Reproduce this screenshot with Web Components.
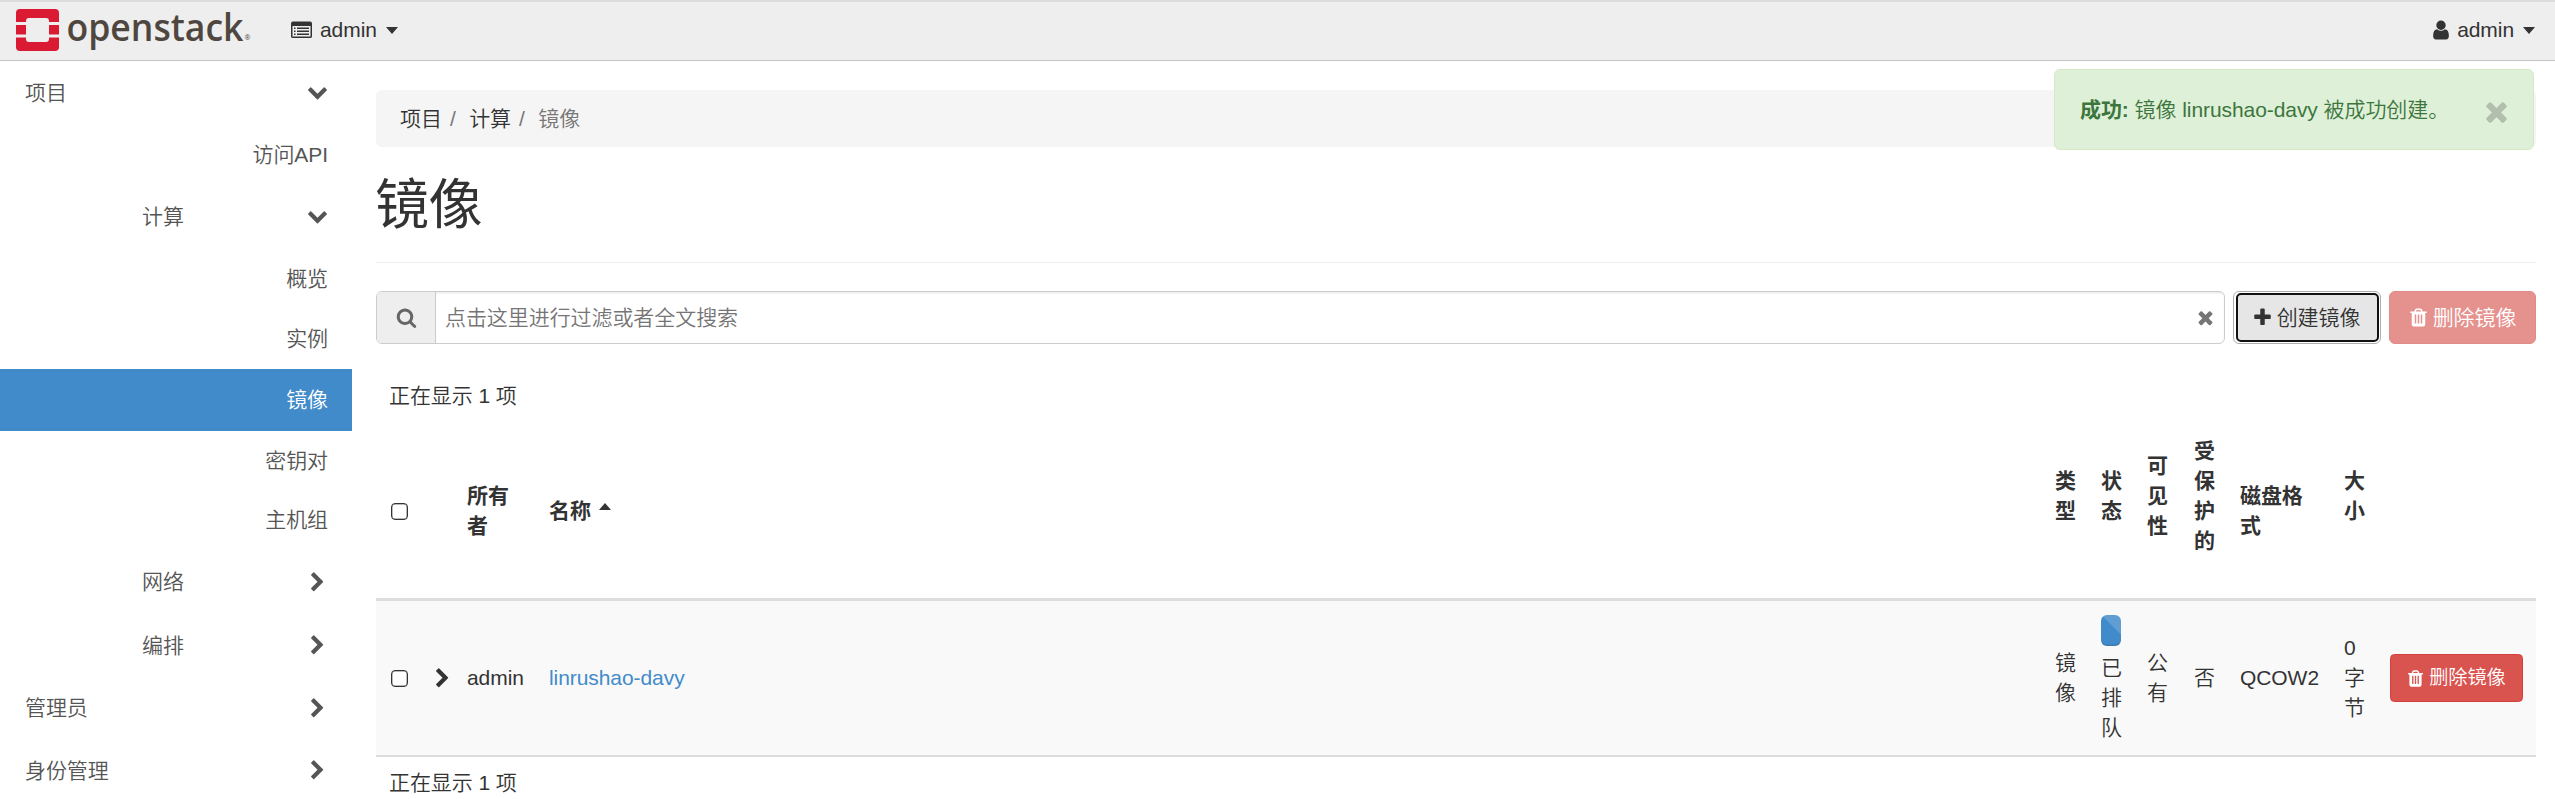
<!DOCTYPE html>
<html lang="zh-CN">
<head>
<meta charset="utf-8">
<title>镜像 - OpenStack Dashboard</title>
<style>
html,body{margin:0;padding:0;height:799px;overflow:hidden;background:#fff}
body{font:350 21px/30px "Liberation Sans","Noto Sans CJK SC",sans-serif;color:#333;letter-spacing:-.07px}
</style>
</head>
<body>
<os-app></os-app>
<script>
const ICONS={
down:'M1683 808l-742 741q-19 19-45 19t-45-19l-742-741q-19-19-19-45.5t19-45.5l166-165q19-19 45-19t45 19l531 531 531-531q19-19 45-19t45 19l166 165q19 19 19 45.5t-19 45.5z',
right:'M1363 877l-742 742q-19 19-45 19t-45-19l-166-166q-19-19-19-45t19-45l531-531-531-531q-19-19-19-45t19-45l166-166q19-19 45-19t45 19l742 742q19 19 19 45t-19 45z',
search:'M1216 832q0-185-131.5-316.5t-316.5-131.5-316.5 131.5-131.5 316.5 131.5 316.5 316.5 131.5 316.5-131.5 131.5-316.5zm512 832q0 52-38 90t-90 38q-54 0-90-38l-343-342q-179 124-399 124-143 0-273.5-55.5t-225-150-150-225-55.5-273.5 55.5-273.5 150-225 225-150 273.5-55.5 273.5 55.5 225 150 150 225 55.5 273.5q0 220-124 399l343 343q37 37 37 90z',
times:'M1490 1322q0 40-28 68l-136 136q-28 28-68 28t-68-28l-294-294-294 294q-28 28-68 28t-68-28l-136-136q-28-28-28-68t28-68l294-294-294-294q-28-28-28-68t28-68l136-136q28-28 68-28t68 28l294 294 294-294q28-28 68-28t68 28l136 136q28 28 28 68t-28 68l-294 294 294 294q28 28 28 68z',
plus:'M1600 736v192q0 40-28 68t-68 28h-416v416q0 40-28 68t-68 28h-192q-40 0-68-28t-28-68v-416h-416q-40 0-68-28t-28-68v-192q0-40 28-68t68-28h416v-416q0-40 28-68t68-28h192q40 0 68 28t28 68v416h416q40 0 68 28t28 68z',
trash:'M704 1376v-704q0-14-9-23t-23-9h-64q-14 0-23 9t-9 23v704q0 14 9 23t23 9h64q14 0 23-9t9-23zm256 0v-704q0-14-9-23t-23-9h-64q-14 0-23 9t-9 23v704q0 14 9 23t23 9h64q14 0 23-9t9-23zm256 0v-704q0-14-9-23t-23-9h-64q-14 0-23 9t-9 23v704q0 14 9 23t23 9h64q14 0 23-9t9-23zm-544-992h448l-48-117q-7-9-17-11h-317q-10 2-17 11zm928 32v64q0 14-9 23t-23 9h-96v948q0 83-47 143.5t-113 60.5h-832q-66 0-113-58.5t-47-141.5v-952h-96q-14 0-23-9t-9-23v-64q0-14 9-23t23-9h309l70-167q15-37 54-63t79-26h320q40 0 79 26t54 63l70 167h309q14 0 23 9t9 23z',
user:'M1536 1399q0 109-62.5 187t-150.5 78h-854q-88 0-150.5-78t-62.5-187q0-85 8.5-160.5t31.5-152 58.5-131 94-89 134.5-34.5q131 128 313 128t313-128q76 0 134.5 34.5t94 89 58.5 131 31.5 152 8.5 160.5zm-256-887q0 159-112.5 271.5t-271.5 112.5-271.5-112.5-112.5-271.5 112.5-271.5 271.5-112.5 271.5 112.5 112.5 271.5z',
list:'M160 128h1472q160 0 160 160v1088q0 160-160 160h-1472q-160 0-160-160v-1088q0-160 160-160zM128 512v864q0 32 32 32h1472q32 0 32-32v-864zM256 640h128v128h-128zM512 640h1024v128h-1024zM256 896h128v128h-128zM512 896h1024v128h-1024zM256 1152h128v128h-128zM512 1152h1024v128h-1024z'
};
function define(name,markup){
  customElements.define(name,class extends HTMLElement{
    constructor(){super();this.attachShadow({mode:'open'}).innerHTML=typeof markup==='function'?'':markup;}
    connectedCallback(){if(typeof markup==='function')this.shadowRoot.innerHTML=markup(this);}
  });
}
define('os-icon',el=>`<style>:host{display:block;flex:none;width:21px;height:21px}svg{display:block;width:100%;height:100%}</style>
<svg viewBox="0 0 1792 1792"><path fill="currentColor" fill-rule="${el.getAttribute('name')==='list'?'evenodd':'nonzero'}" d="${ICONS[el.getAttribute('name')]}"/></svg>`);

define('os-logo',`<style>:host{display:flex;width:240px;height:58px}svg{display:block;overflow:visible;flex:none}text{letter-spacing:0}.r{margin:32px 0 0 .5px;font:500 7px/8px "Open Sans",sans-serif;letter-spacing:0;color:#4f473f}</style>
<svg width="228" height="58" viewBox="0 -7 228 58">
<path fill="#da1a32" d="M4 0h35a4 4 0 0 1 4 4v9H33v-1a3 3 0 0 0-3-3H13a3 3 0 0 0-3 3v1H0V4a4 4 0 0 1 4-4zM0 16h10v9.500H0zM33 16h10v9.500H33zM0 28.500h10V30a3 3 0 0 0 3 3h17a3 3 0 0 0 3-3v-1.500h10V38a4 4 0 0 1-4 4H4a4 4 0 0 1-4-4z"/>
<text x="50.500" y="32" textLength="177" lengthAdjust="spacingAndGlyphs" font-family="Open Sans" font-weight="600" font-size="38" fill="#4f473f">openstack</text>
</svg><span class="r">®</span>`);

define('os-topbar',`<style>
:host{display:flex;align-items:center;box-sizing:border-box;height:61px;border-top:2px solid #dcdcdc;border-bottom:1px solid #c4c4c4;background:#eee;padding:0 20px 0 16px}
.m{display:flex;align-items:center;margin-top:-2px}
.caret{border:6px solid transparent;border-top:7px solid #333;border-bottom:0}
.proj{margin-left:35px}.proj os-icon{margin-right:8px}.proj .caret{margin-left:9px}
.user{margin-left:auto}.user os-icon{width:22px;height:22px;margin-right:5px}.user .caret{margin-left:9px}
</style><os-logo></os-logo>
<div class="m proj"><os-icon name="list"></os-icon><span>admin</span><i class="caret"></i></div>
<div class="m user"><os-icon name="user"></os-icon><span>admin</span><i class="caret"></i></div>`);

define('os-nav-item',el=>`<style>
:host{display:flex;box-sizing:border-box;align-items:center;justify-content:space-between;height:62px;padding:0 24px 0 25px;color:#555}
:host([level="2"]){padding-left:142px}
:host([level="3"]){justify-content:flex-end}
:host([active]){background:#428bca;color:#fff}
:host([icon="down"]) os-icon{margin-bottom:3px}
</style><span><slot></slot></span>${el.hasAttribute('icon')?`<os-icon name="${el.getAttribute('icon')}"></os-icon>`:''}`);

define('os-sidebar',`<style>:host{display:block;width:352px;padding-top:1px}</style>
<os-nav-item icon="down">项目</os-nav-item>
<os-nav-item level="3" style="height:61px">访问API</os-nav-item>
<os-nav-item level="2" icon="down" style="height:64px">计算</os-nav-item>
<os-nav-item level="3" style="height:60px">概览</os-nav-item>
<os-nav-item level="3" style="height:60px">实例</os-nav-item>
<os-nav-item level="3" active>镜像</os-nav-item>
<os-nav-item level="3" style="height:59px">密钥对</os-nav-item>
<os-nav-item level="3" style="height:60px">主机组</os-nav-item>
<os-nav-item level="2" icon="right" style="height:64px">网络</os-nav-item>
<os-nav-item level="2" icon="right" style="height:63px">编排</os-nav-item>
<os-nav-item icon="right">管理员</os-nav-item>
<os-nav-item icon="right" style="height:63px">身份管理</os-nav-item>`);

define('os-breadcrumb',`<style>:host{display:flex;align-items:center;box-sizing:border-box;height:57px;padding:1px 24px 0;background:#f5f5f5;border-radius:6px}
.s{color:#777;padding:0 13.5px 0 8px}.a{color:#777}</style>
<span>项目</span><span class="s">/</span><span>计算</span><span class="s">/</span><span class="a">镜像</span>`);

define('os-button',el=>`<style>
:host{display:flex;flex:none;box-sizing:border-box;align-items:center;justify-content:center;height:53px;border-radius:6px}
:host([kind="focus"]){width:148px;border:1px solid #adadad;background:#fff;padding:1px 1.5px}
:host([kind="focus"]) .in{box-sizing:border-box;border:2.5px solid #111;border-radius:5px;background:#e6e6e6;width:100%;height:100%;padding-right:2px}
:host([kind="disabled"]){width:147px;border:1px solid #e18a87;background:#e5928f;color:#fff}
:host([kind="small"]){width:133px;height:48px;border:1px solid #d43f3a;border-radius:4.5px;background:#d9534f;color:#fff;font-size:19.2px}
:host([kind="small"]) os-icon{width:19px;height:19px}
.in{display:flex;align-items:center;justify-content:center;gap:4px;padding-right:1px}
</style><div class="in"><os-icon name="${el.getAttribute('icon')}"></os-icon><span><slot></slot></span></div>`);

define('os-search',`<style>
:host{display:flex;box-sizing:border-box;flex:1;height:53px;border:1px solid #ccc;border-radius:6px;overflow:hidden;color:#757575}
.a{display:flex;align-items:center;justify-content:center;width:58px;background:#eee;border-right:1px solid #ccc;color:#666}
.i{flex:1;display:flex;align-items:center;justify-content:space-between;padding:0 8px 0 9px;box-shadow:inset 0 1.5px 1.5px rgba(0,0,0,.075)}
</style><div class="a"><os-icon name="search"></os-icon></div><div class="i"><span>点击这里进行过滤或者全文搜索</span><os-icon name="times"></os-icon></div>`);

define('os-checkbox',`<style>:host{display:block;box-sizing:border-box;width:17px;height:17px;margin-left:3px;border:1px solid #333;box-shadow:inset 0 0 0 .5px #777;border-radius:4px;background:#fff}</style>`);

define('os-progress',`<style>:host{display:block;box-sizing:border-box;width:20px;height:31px;margin:1px 0 7px;border-radius:6px;background:linear-gradient(45deg,#428bca 0 61%,#5f9dd3 62%);box-shadow:inset 0 -1.5px 0 rgba(0,0,0,.12)}</style>`);

define('os-image-table',`<style>
:host{display:block}
.count{height:30px;padding:0 13px}
.row{display:grid;align-items:center;grid-template-columns:47px 32px 82px 1506px 46px 46px 47px 46px 104px 46px 145px;box-sizing:border-box;padding-left:12px}
.head{height:174px;margin-top:13px;font-weight:700}
.body{height:159px;border-top:3px solid #ddd;border-bottom:2px solid #ddd;background:#f9f9f9}
.v{width:21px;word-break:break-all}
.p::after{content:"";display:block;height:30px}
.name{display:flex;align-items:center;gap:8px}
.up{border:6.500px solid transparent;border-bottom:7px solid #333;border-top:0;margin-top:-9px}
.link{color:#428bca}
.foot{margin-top:11px}
.c{margin-left:-3px}
</style>
<div class="count">正在显示 1 项</div>
<div class="row head"><os-checkbox></os-checkbox><span></span><span style="width:42px">所有者</span><span class="name">名称<i class="up"></i></span><span class="v p">类型</span><span class="v p">状态</span><span class="v p">可见性</span><span class="v p">受保护的</span><span style="width:63px">磁盘格式</span><span class="v p">大小</span><span></span></div>
<div class="row body"><os-checkbox></os-checkbox><os-icon class="c" name="right"></os-icon><span>admin</span><span class="link">linrushao-davy</span><span class="v">镜像</span><div class="v"><os-progress></os-progress>已排队</div><span class="v">公有</span><span>否</span><span>QCOW2</span><span class="v">0 字节</span><os-button kind="small" icon="trash">删除镜像</os-button></div>
<div class="count foot">正在显示 1 项</div>`);

define('os-toast',`<style>
:host{display:flex;align-items:center;justify-content:space-between;box-sizing:border-box;width:480px;height:81px;padding:0 21px 0 25px;border:1px solid #d6e9c6;border-radius:6px;background:#dff0d8;color:#3c763d}
b{font-weight:700}os-icon{width:31px;height:31px;color:#000;opacity:.2;margin-top:3px;filter:drop-shadow(0 1.5px 0 #fff)}
</style><span><b>成功:</b> 镜像 linrushao-davy 被成功创建。</span><os-icon name="times"></os-icon>`);

define('os-app',`<style>
:host{display:block;width:2555px;height:799px;position:relative;overflow:hidden}
.cols{display:flex}
main{flex:1;min-width:0;padding:29px 19px 0 24px}
h1{margin:28px 0 0 -1px;font-size:54px;line-height:60px;font-weight:400;height:87px;letter-spacing:-.5px}
.tools{display:flex;border-top:1px solid #eee;padding-top:28px}
.tools os-button{margin-left:8px}
os-image-table{margin-top:37px}
os-toast{position:absolute;left:2054px;top:69px}
</style>
<os-topbar></os-topbar>
<div class="cols"><os-sidebar></os-sidebar>
<main><os-breadcrumb></os-breadcrumb><h1>镜像</h1>
<div class="tools"><os-search></os-search><os-button kind="focus" icon="plus">创建镜像</os-button><os-button kind="disabled" icon="trash">删除镜像</os-button></div>
<os-image-table></os-image-table></main></div>
<os-toast></os-toast>`);
</script>
</body>
</html>
